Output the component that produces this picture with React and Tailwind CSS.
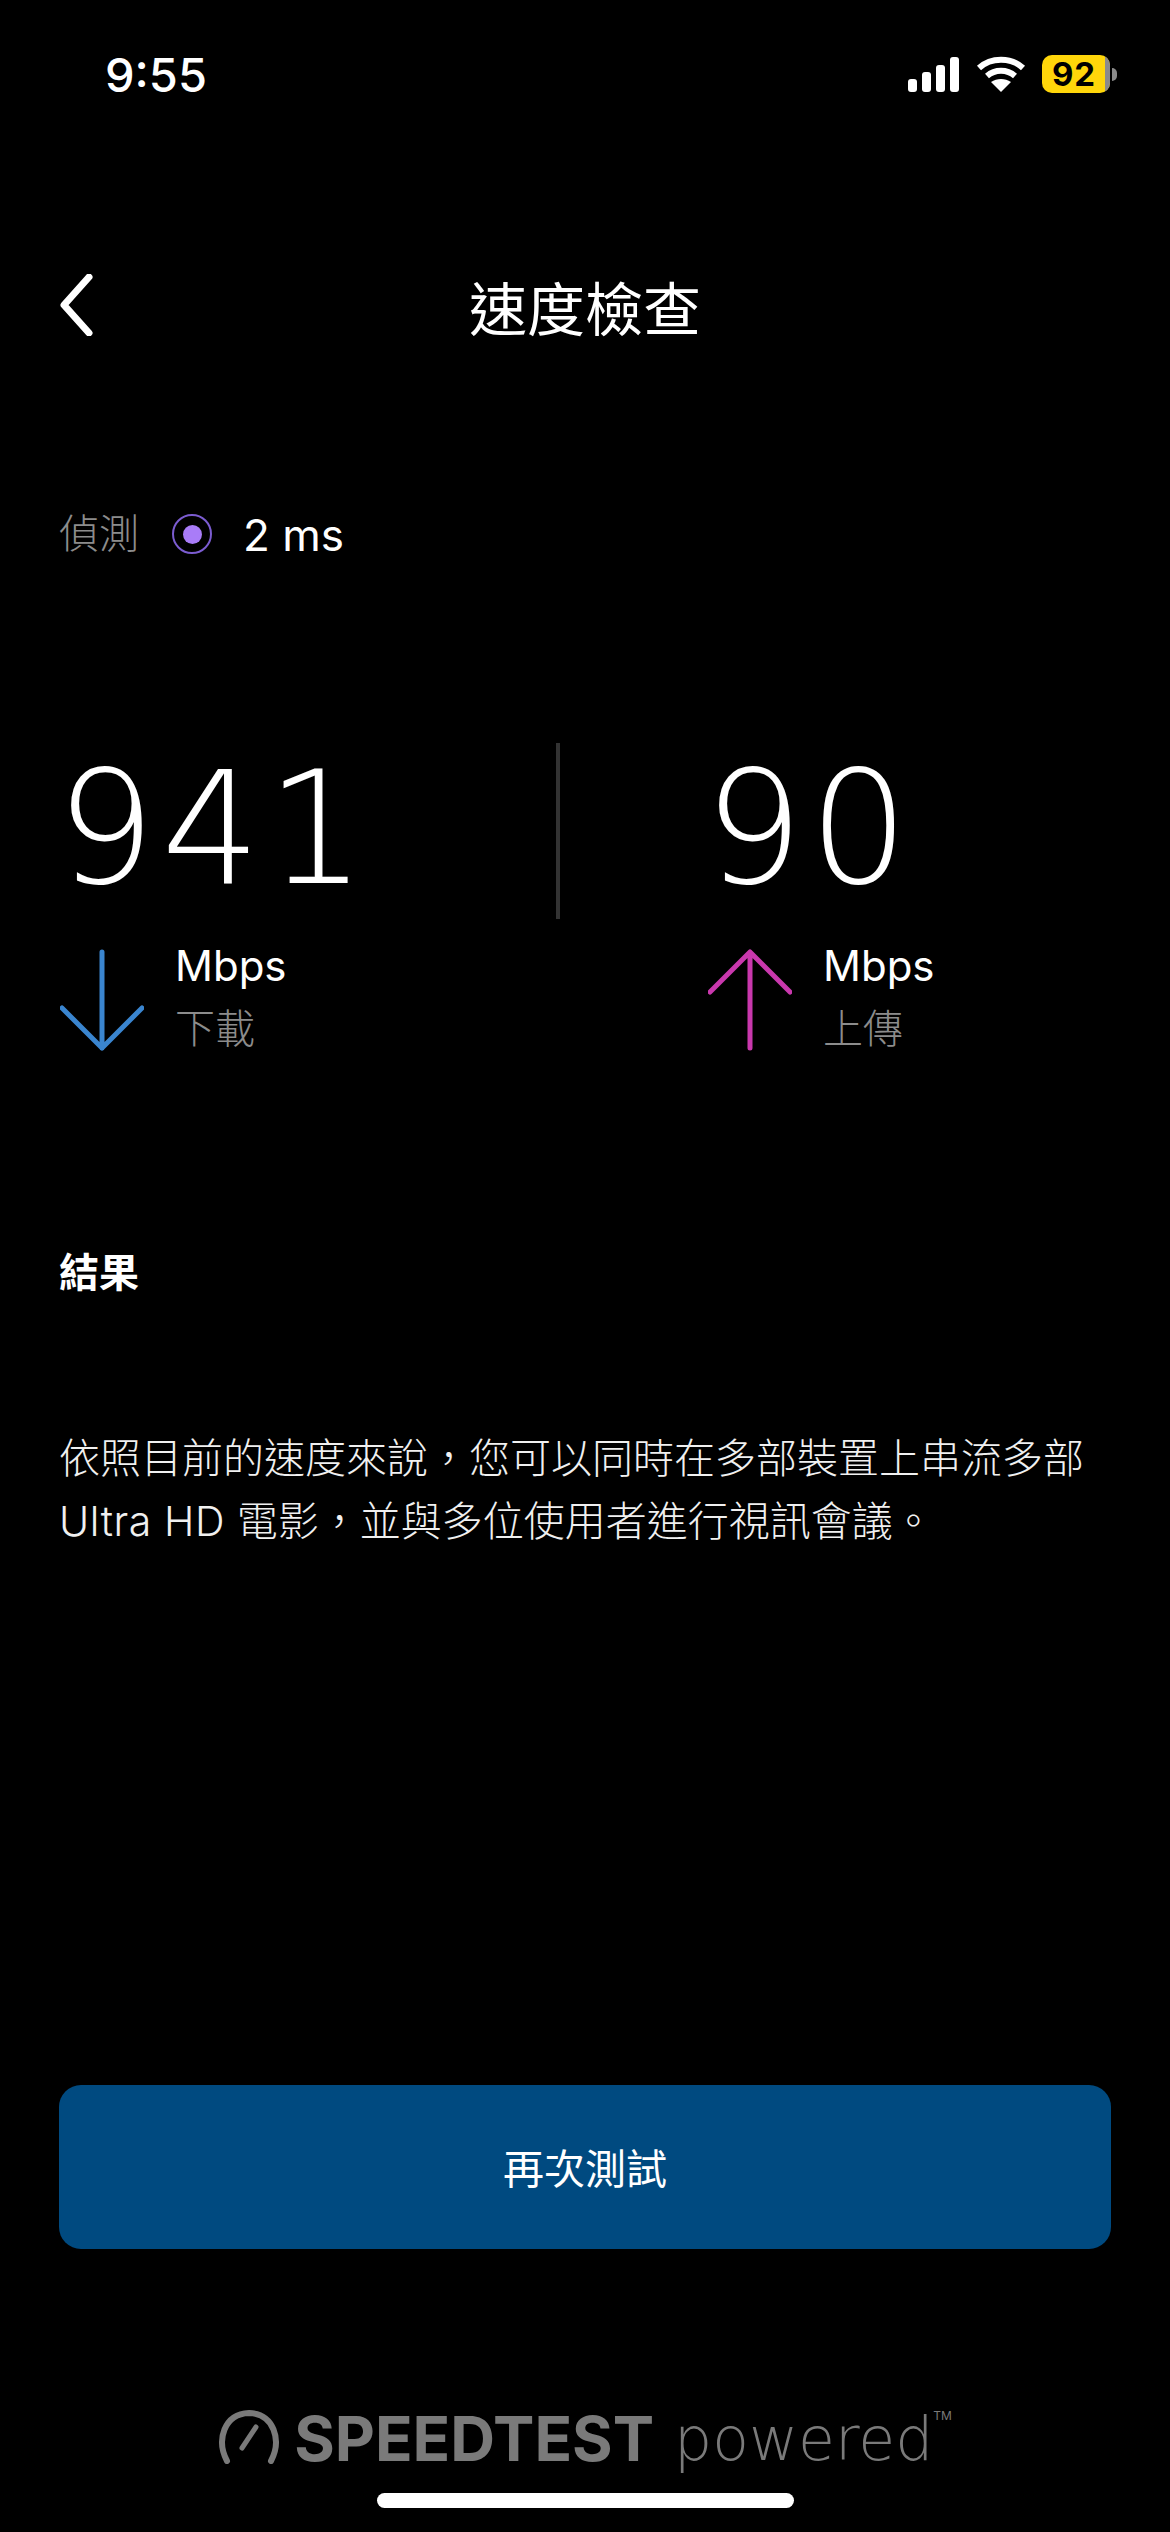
import React from 'react';

const cjk = "font-['Inter','Noto_Sans_CJK_TC',sans-serif]";

function Signal() {
    return (
        <svg width="52" height="35" viewBox="0 0 52 35" fill="#fff">
            <rect x="0" y="22" width="9" height="13" rx="3" />
            <rect x="14" y="15" width="9" height="20" rx="3" />
            <rect x="28" y="8" width="9" height="27" rx="3" />
            <rect x="42" y="0" width="9" height="35" rx="3" />
        </svg>
    );
}

function Wifi() {
    return (
        <svg width="50" height="36" viewBox="0 0 50 36" fill="none" stroke="#fff" strokeWidth="6">
            <path d="M3 12 C15 1 35 1 47 12" />
            <path d="M11 20 C19 13 31 13 39 20" />
            <path d="M25 36 L15 26 C21 22 29 22 35 26 Z" fill="#fff" stroke="none" />
        </svg>
    );
}

function Battery() {
    return (
        <div className="flex items-center">
            <div className="relative w-[68px] h-[38px] rounded-[10px] bg-[#ffd60a] overflow-hidden flex items-center justify-center">
                <div className="absolute right-0 top-0 bottom-0 w-[5px] bg-[#8a8a8a]" />
                <span className="relative text-black text-[33px] font-bold font-['Inter',sans-serif] leading-none tracking-[1px] pr-[4px]">92</span>
            </div>
            <div className="w-[5px] h-[13px] ml-[2px] rounded-r-full bg-[#8a8a8a]" />
        </div>
    );
}

function Medida({ valor, unidad, label, color, up, className }) {
    return (
        <div className={className}>
            <div className="font-['DejaVu_Sans',sans-serif] font-extralight text-white text-[156px] leading-[156px] h-[156px] tracking-[6px] -ml-[3px]">{valor}</div>
            <div className="flex items-start gap-[31px] ml-[1px] mt-[42px]">
                <svg width="84" height="102" viewBox="0 0 84 102" fill="none" stroke={color} strokeWidth="5" strokeLinecap="round" strokeLinejoin="round">
                    {up ? (
                        <path d="M42 99 V3 M2 43 L42 3 L82 43" />
                    ) : (
                        <path d="M42 3 V99 M2 59 L42 99 L82 59" />
                    )}
                </svg>
                <div className="-mt-[8px]">
                    <div className="font-['Inter',sans-serif] text-white text-[42px] leading-[50px]">{unidad}</div>
                    <div className={`${cjk} text-[#8c8c8c] text-[40px] font-light leading-[50px] mt-[13px]`}>{label}</div>
                </div>
            </div>
        </div>
    );
}

export default function App() {
    return (
        <div className={`relative w-[1170px] h-[2532px] bg-black overflow-hidden ${cjk}`}>
            {/* Barra de estado */}
            <div className="flex items-center justify-between h-[38px] mt-[55px] pl-[105px] pr-[53px] absolute top-0 left-0 right-0">
                <span className="font-['Inter',sans-serif] font-medium text-white text-[47px] leading-none">9:55</span>
                <div className="flex items-center gap-[16px]">
                    <Signal />
                    <Wifi />
                    <Battery />
                </div>
            </div>

            <div className="flex flex-col px-[59px] pt-[270px]">
                {/* Cabecera */}
                <div className="relative flex items-center justify-center h-[70px]">
                    <svg className="absolute left-0 top-[4px]" width="34" height="62" viewBox="0 0 34 62" fill="none" stroke="#fff" strokeWidth="7" strokeLinecap="round" strokeLinejoin="round">
                        <path d="M30 3 L5 31 L30 59" />
                    </svg>
                    <h1 className="text-white text-[58px] font-normal leading-[70px] pt-[10px]">速度檢查</h1>
                </div>

                {/* Latencia */}
                <div className="flex items-center mt-[169px] h-[50px]">
                    <span className="text-[#8c8c8c] text-[40px] font-light">偵測</span>
                    <div className="w-[40px] h-[40px] ml-[33px] rounded-full border-2 border-[#7b5cd0] flex items-center justify-center">
                        <div className="w-[19px] h-[19px] rounded-full bg-[#a97cf8]" />
                    </div>
                    <span className="ml-[31px] font-['Inter',sans-serif] text-white text-[44px] pt-[2px]">2 ms</span>
                </div>

                {/* Resultados */}
                <div className="relative flex mt-[192px]">
                    <Medida valor="941" unidad="Mbps" label="下載" color="#3a85cf" className="w-[648px]" />
                    <Medida valor="90" unidad="Mbps" label="上傳" color="#c938ad" up />
                    <div className="absolute left-[497px] -top-[8px] w-[4px] h-[176px] bg-[#333333]" />
                </div>

                <h2 className="text-white text-[40px] font-bold leading-[50px] mt-[194px]">結果</h2>
                <p className="text-[#f0f0f0] text-[41px] font-light leading-[63px] mt-[129px] w-[1060px]">
                    依照目前的速度來說，您可以同時在多部裝置上串流多部 <span className="tracking-[0.6px]">Ultra HD</span> 電影，並與多位使用者進行視訊會議。
                </p>

                <button className="mt-[532px] h-[164px] w-full rounded-[22px] bg-[#004a80] text-white text-[41px] font-normal pt-[6px]">再次測試</button>

                {/* Logo */}
                <div className="flex items-end justify-center mt-[161px] text-[#7a7a7a]">
                    <svg width="62" height="54" viewBox="0 0 62 54" fill="none" stroke="#7a7a7a" strokeWidth="6" strokeLinecap="round">
                        <path d="M9 51 C-2 30 6 4 31 3 C56 4 64 30 53 51" />
                        <path d="M24 38 L38 17" strokeWidth="5" />
                    </svg>
                    <span className="ml-[14px] font-['Inter',sans-serif] font-bold text-[62px] leading-[50px]">SPEEDTEST</span>
                    <span className="ml-[20px] font-['DejaVu_Sans',sans-serif] font-extralight text-[60px] leading-[50px]">powered</span>
                    <span className="font-['Inter',sans-serif] text-[12px] leading-none self-start">TM</span>
                </div>
            </div>

            {/* Indicador de inicio */}
            <div className="absolute left-[377px] top-[2493px] w-[417px] h-[15px] rounded-full bg-white" />
        </div>
    );
}
